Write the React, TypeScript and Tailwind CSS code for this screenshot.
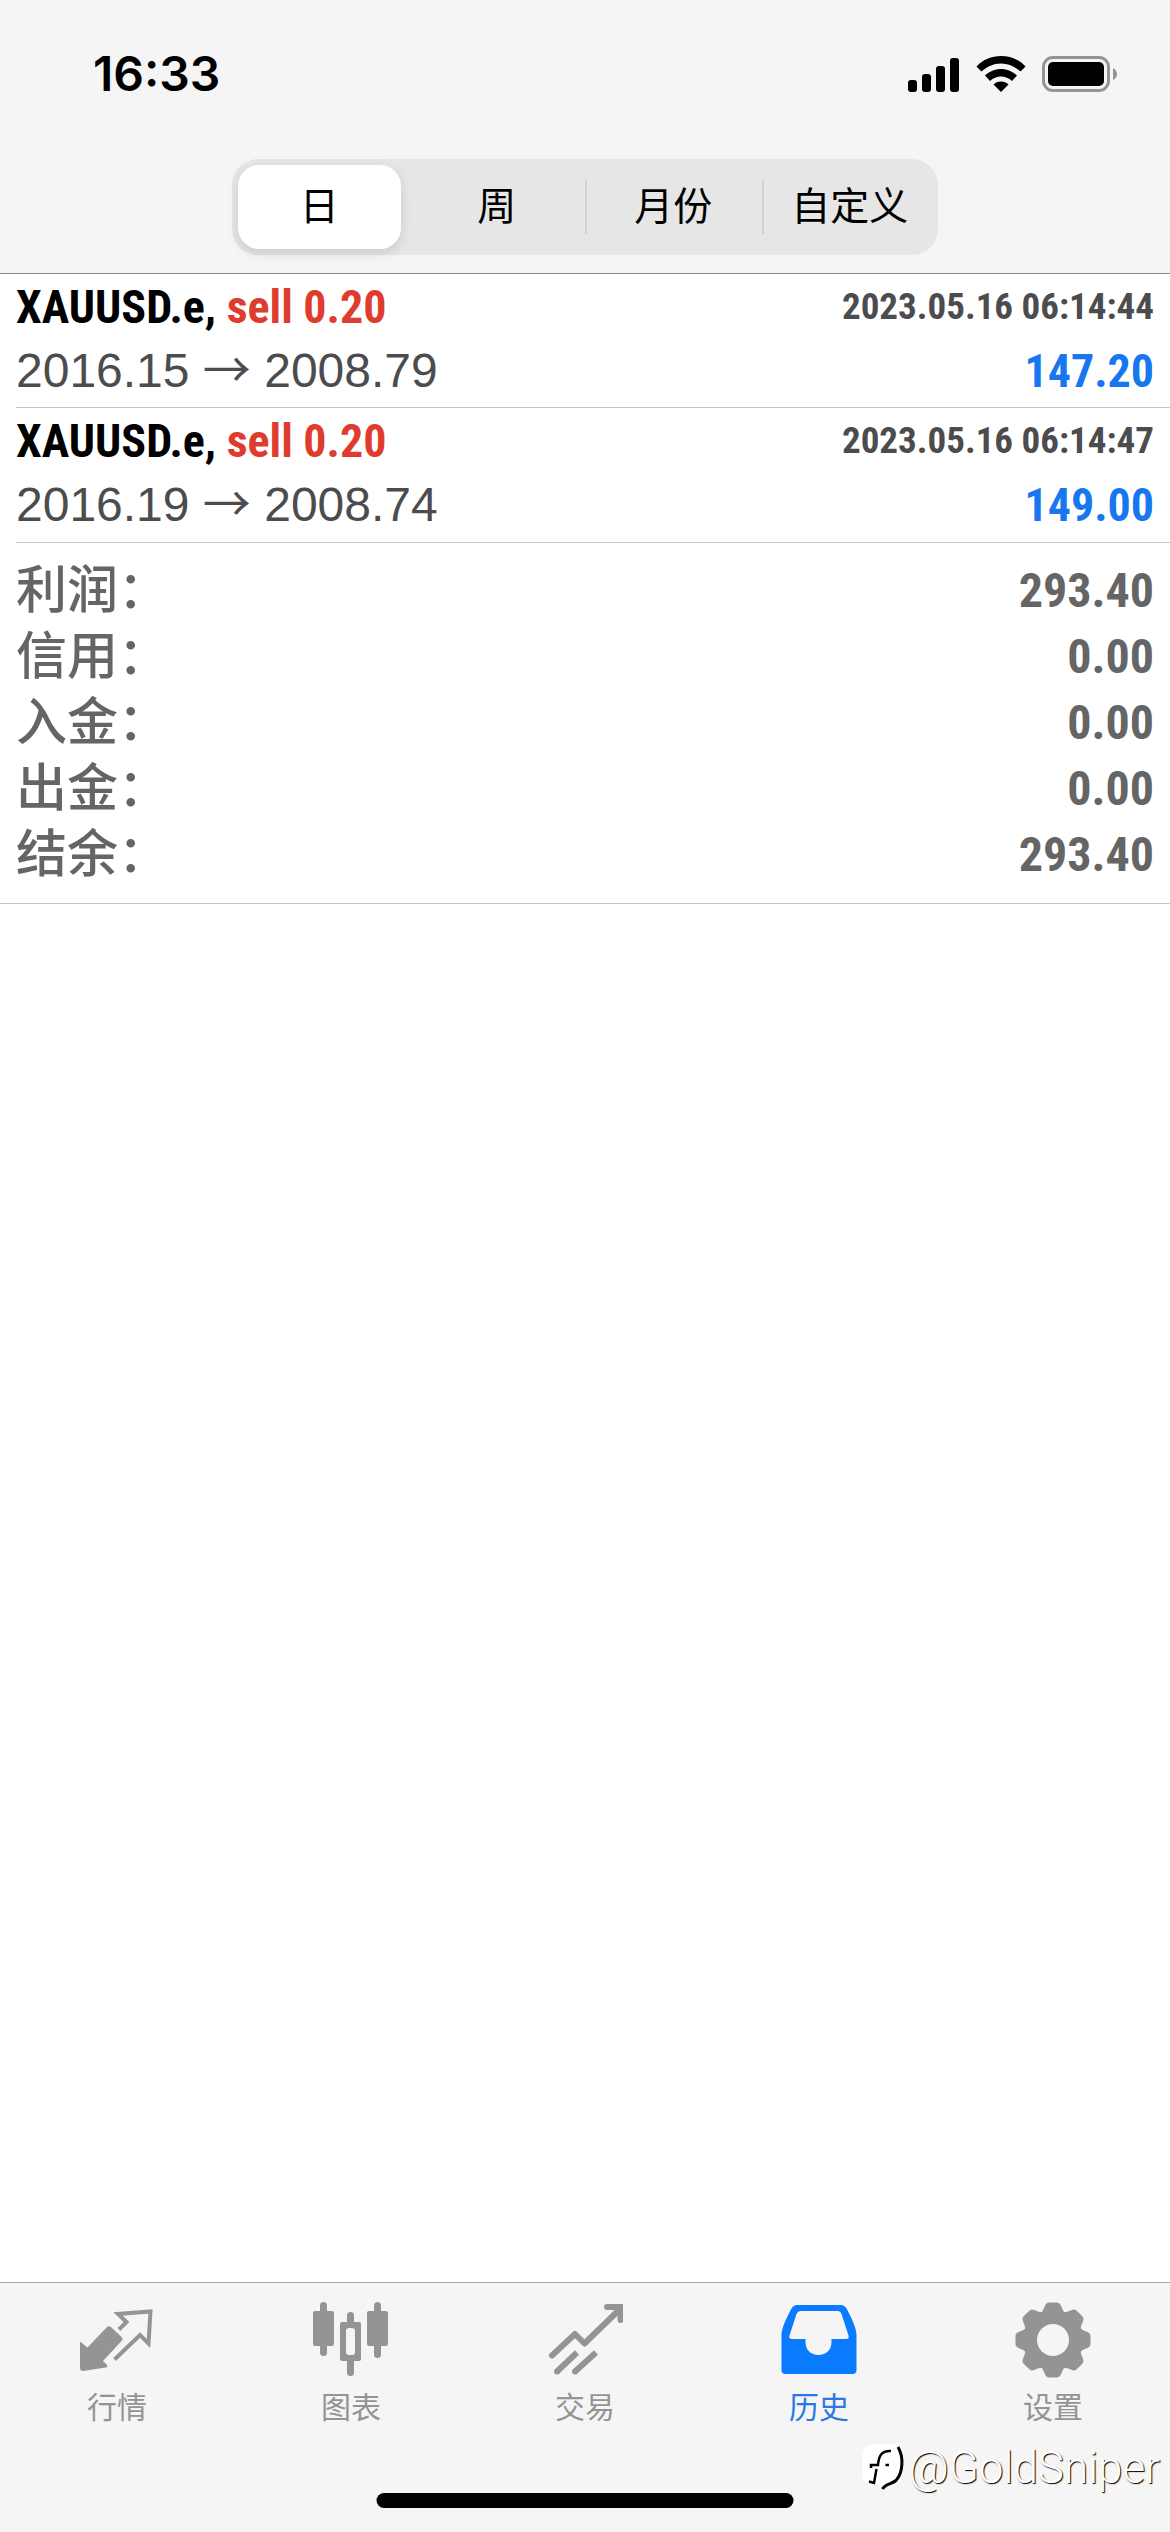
import type { ReactNode } from "react";

const deals = [
  {
    symbol: "XAUUSD.e,",
    side: "sell 0.20",
    open: "2016.15",
    close: "2008.79",
    time: "2023.05.16 06:14:44",
    profit: "147.20",
  },
  {
    symbol: "XAUUSD.e,",
    side: "sell 0.20",
    open: "2016.19",
    close: "2008.74",
    time: "2023.05.16 06:14:47",
    profit: "149.00",
  },
];

const totals = [
  { label: "利润：", value: "293.40" },
  { label: "信用：", value: "0.00" },
  { label: "入金：", value: "0.00" },
  { label: "出金：", value: "0.00" },
  { label: "结余：", value: "293.40" },
];

const periods = ["日", "周", "月份", "自定义"];

const QuotesIcon = () => (
  <svg viewBox="0 0 76 76" className="size-19" aria-hidden="true">
    <path
      d="M1 39.5L8.5 45.5L27.5 25.500Q30 23 32.500 25.500L42.500 35Q44.500 37 42.500 39L24 59L28 63Q29 65 27 65.500L4 69Q1 69 1 66Z"
      fill="#949494"
    />
    <path
      d="M40 27.500L47.500 20L39 12L71.500 9.500L69.500 41.500L61 33L35.500 57.500"
      fill="none"
      stroke="#949494"
      strokeWidth="4"
    />
  </svg>
);

const ChartIcon = () => (
  <svg viewBox="1 0 76 76" className="size-19" fill="#949494" aria-hidden="true">
    <rect x="8" y="0" width="7" height="54" rx="3.500" />
    <rect x="1" y="9" width="21" height="35" rx="2" />
    <rect x="62" y="0" width="7" height="56" rx="3.500" />
    <rect x="55" y="9" width="21" height="35" rx="2" />
    <rect x="35" y="10" width="7" height="14" rx="3.500" />
    <rect x="35" y="54" width="7" height="20" rx="3.500" />
    <path
      fillRule="evenodd"
      d="M30 20h17q2 0 2 2v35q0 2-2 2h-17q-2 0-2-2v-35q0-2 2-2zM37 26q-3 0-3 3v21q0 3 3 3h3q3 0 3-3v-21q0-3-3-3z"
    />
  </svg>
);

const TradeIcon = () => (
  <svg
    viewBox="0 0 76 76"
    className="size-19"
    fill="none"
    stroke="#949494"
    strokeWidth="6"
    aria-hidden="true"
  >
    <path d="M5 53.500L28 32L37.500 41.500L72 8" strokeLinecap="round" strokeLinejoin="round" />
    <path d="M60 5H73.500V18" strokeLinecap="round" />
    <path d="M10 69.500L30 50.500M28 69.500L49 50.500" />
    <path d="M10 69.500h.1M28 69.500h.1" strokeLinecap="round" />
  </svg>
);

const HistoryIcon = () => (
  <svg viewBox="0 0 76 76" className="size-19" aria-hidden="true">
    <path
      fill="#0a7aff"
      fillRule="evenodd"
      d="M16 3H60Q63.500 3 65.500 6.500C70 15 75.500 26 75.500 33V68Q75.500 72 71.500 72H4.500Q.5 72 .5 68V33C.5 26 6 15 10.500 6.500Q12.500 3 16 3ZM20 9Q17 9 15.500 12L8.500 33.500Q7.500 37 11 37H24.500V40C24.500 48 30 53 37.500 53S50.500 48 50.500 40V37H65Q68.500 37 67.500 33.500L60.500 12Q59.500 9 56.500 9Z"
    />
  </svg>
);

const SettingsIcon = () => (
  <svg viewBox="0 0 76 76" className="size-19" aria-hidden="true">
    <g fill="#949494">
      <circle cx="38" cy="38" r="30" />
      {[0, 45, 90, 135, 180, 225, 270, 315].map((angle) => (
        <path
          key={angle}
          transform={`rotate(${angle} 38 38)`}
          d="M25 11C30 9.500 28.500 .5 34 .5H42C47.500 .5 46 9.500 51 11L38 30Z"
        />
      ))}
    </g>
    <circle cx="38" cy="38" r="16" fill="#f5f5f5" />
  </svg>
);

const tabs: { label: string; icon: ReactNode; active?: boolean }[] = [
  { label: "行情", icon: <QuotesIcon /> },
  { label: "图表", icon: <ChartIcon /> },
  { label: "交易", icon: <TradeIcon /> },
  { label: "历史", icon: <HistoryIcon />, active: true },
  { label: "设置", icon: <SettingsIcon /> },
];

const StatusBar = () => (
  <div className="flex items-center justify-between h-[148px] pl-[93px] pr-[52px]">
    <span className="font-['Inter'] font-semibold text-[48px] leading-[56px]">16:33</span>
    <div className="flex items-center gap-4">
      <svg viewBox="0 0 52 36" className="w-[52px] h-9" aria-hidden="true">
        <rect x="0" y="24" width="9" height="12" rx="3" />
        <rect x="14" y="18" width="9" height="18" rx="3" />
        <rect x="28" y="10" width="9" height="26" rx="3" />
        <rect x="42" y="2" width="9" height="34" rx="3" />
      </svg>
      <svg viewBox="0 0 50 36" className="w-[50px] h-9" aria-hidden="true">
        <path d="M25 0C34.500 0 43 3.500 49.500 10.500L44.500 15.500C39 10.500 32.500 7.500 25 7.500S11 10.500 5.500 15.500L.5 10.500C7 3.500 15.500 0 25 0Z" />
        <path d="M25 13C31 13 36.500 15.500 41 19.500L36 25C33 22 29 20.500 25 20.500S17 22 14 25L9 19.500C13.500 15.500 19 13 25 13Z" />
        <path d="M25 25.500C28 25.500 30.500 26.500 32.500 28.500L25 36L17.500 28.500C19.500 26.500 22 25.500 25 25.500Z" />
      </svg>
      <svg viewBox="0 0 76 36" className="w-[76px] h-9" aria-hidden="true">
        <rect x="1.500" y="1.500" width="65" height="33" rx="9.500" fill="none" stroke="#949494" strokeWidth="3" />
        <rect x="6" y="6" width="56" height="24" rx="5" />
        <path d="M71 12Q75 14 75 18T71 24Z" fill="#949494" />
      </svg>
    </div>
  </div>
);

const PeriodPicker = () => (
  <div className="grid grid-cols-4 w-[706px] h-24 mx-auto mt-[11px] rounded-[26px] bg-[#e6e6e7]">
    {periods.map((period, index) => (
      <button
        key={period}
        type="button"
        className={
          index === 0
            ? "my-[6px] ml-[6px] mr-2 rounded-[21px] bg-white shadow-[0_4px_12px_rgba(0,0,0,0.12)]"
            : "flex items-center"
        }
      >
        {index > 1 && <span className="w-[2px] h-[54px] -mr-[2px] bg-[#d2d2d4]" />}
        <span className="flex-1">{period}</span>
      </button>
    ))}
  </div>
);

export default function App() {
  return (
    <div className="flex flex-col min-h-screen bg-white text-black font-['Liberation_Sans','Noto_Sans_CJK_SC',sans-serif]">
      <header className="h-[274px] bg-[#f5f5f5] border-b border-[#8a8a8c] text-[39px] leading-[58px]">
        <StatusBar />
        <PeriodPicker />
      </header>

      <main className="flex-1">
        <ul className="pl-4 font-['Roboto_Condensed','Liberation_Sans',sans-serif]">
          {deals.map((deal) => (
            <li
              key={deal.time}
              className="h-[134px] last:h-[135px] pr-4 pt-px border-b border-[#c4c4c6] text-[46px] leading-[64px] font-bold"
            >
              <div className="flex items-center justify-between">
                <span>
                  {deal.symbol} <span className="text-[#df3c30]">{deal.side}</span>
                </span>
                <time className="text-[37px] text-[#4c4c4e]">{deal.time}</time>
              </div>
              <div className="flex items-center justify-between">
                <span className="font-['Liberation_Sans'] font-normal text-[48px] text-[#4c4c4e]">
                  {deal.open}{" "}
                  <span className="font-['Noto_Sans_CJK_SC'] leading-none">→</span>{" "}
                  {deal.close}
                </span>
                <span className="text-[#1777ee]">{deal.profit}</span>
              </div>
            </li>
          ))}
        </ul>

        <dl className="px-4 pt-[15px] pb-[15px] border-b border-[#c4c4c6] text-[#656565] leading-[66px]">
          {totals.map((total) => (
            <div key={total.label} className="flex items-center justify-between">
              <dt className="font-medium text-[51px]">{total.label}</dt>
              <dd className="font-['Roboto_Condensed','Liberation_Sans',sans-serif] font-bold text-[48px]">
                {total.value}
              </dd>
            </div>
          ))}
        </dl>
      </main>

      <footer className="relative h-[250px] bg-[#f5f5f5] border-t border-[#a8a8aa]">
        <nav className="grid grid-cols-5 pt-[19px]">
          {tabs.map((tab) => (
            <a
              key={tab.label}
              href="#"
              className={
                tab.active
                  ? "flex flex-col items-center gap-2 text-[30px] leading-[44px] text-[#2a78e4]"
                  : "flex flex-col items-center gap-2 text-[30px] leading-[44px] text-[#949494]"
              }
            >
              {tab.icon}
              {tab.label}
            </a>
          ))}
        </nav>

        <div className="absolute bottom-6 left-1/2 -translate-x-1/2 w-[417px] h-[15px] rounded-full bg-black" />

        <div className="absolute right-[10px] bottom-[39px] flex items-center gap-1 text-white">
          <svg viewBox="0 0 44 50" className="w-11 h-[50px]" aria-hidden="true">
            <path d="M14 1H30Q42 1 42 13V29Q42 40 31 42Q25 43 21 47L20 42H14Q1 42 1 29V13Q1 1 14 1Z" fill="#fff" />
            <path
              d="M30 8C22 7.500 18 11 17 22H10V25M15.500 26L13 40L8 38.500M24.500 22h3.500"
              fill="none"
              stroke="#000"
              strokeWidth="2.500"
            />
            <path
              d="M37 4C43 14 42 30 35 37.500C31 41 24 41 21.500 46"
              fill="none"
              stroke="#000"
              strokeWidth="3"
            />
          </svg>
          <span className="font-['Roboto'] font-light text-[44px] leading-[50px] [text-shadow:1px_1px_1px_#000]">
            @GoldSniper
          </span>
        </div>
      </footer>
    </div>
  );
}
